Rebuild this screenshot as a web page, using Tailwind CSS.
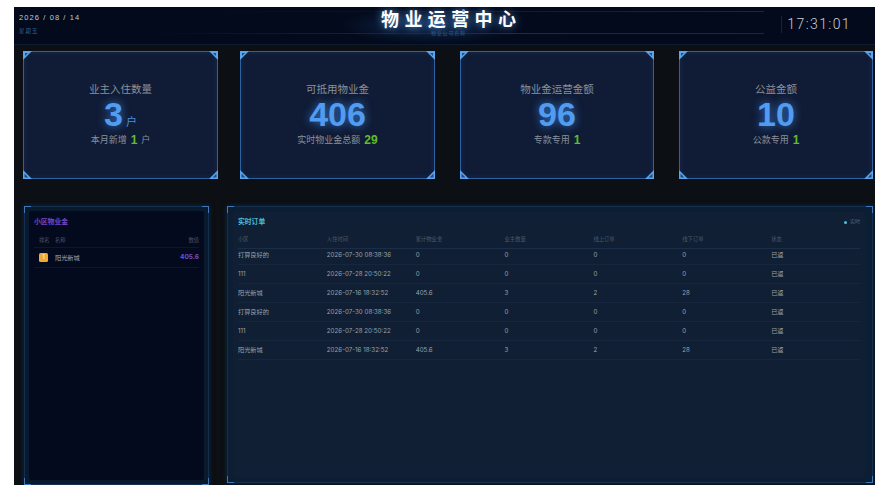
<!DOCTYPE html>
<html lang="zh-CN">
<head>
  <meta charset="UTF-8">
  <title>物业运营中心</title>
  <script src="https://cdn.jsdelivr.net/npm/@tailwindcss/browser@4"></script>
</head>
<body class="bg-white font-['Liberation_Sans','Noto_Sans_CJK_SC',sans-serif]">
<div class="w-[879px] h-[492px] pt-[7px] pb-[7px] pl-[14px] pr-[4px] overflow-hidden">
  <div class="h-[478px] bg-[#0c0f13] flex flex-col overflow-hidden">

    <!-- header -->
    <header class="relative h-[38px] shrink-0 bg-[#030a1c] border-b border-[#0e1c33] flex justify-between">
      <div class="pl-[5px] pt-[6px]">
        <div class="text-[7.5px] leading-[9px] tracking-[1.1px] text-[#c3c9d2]">2026 / 08 / 14</div>
        <div class="mt-[6px] text-[5.5px] leading-[7px] tracking-[1px] text-[#2f5f94]">星期五</div>
      </div>
      <div class="absolute left-[186px] top-[4px] w-[564px] h-px bg-gradient-to-r from-transparent to-[#12294a]"></div>
      <div class="absolute left-[136px] top-[26px] w-[614px] h-px bg-gradient-to-r from-transparent via-[#12305a] to-[#12294a]"></div>
      <div class="absolute left-[326px] top-0 w-[180px] h-[37px] bg-[radial-gradient(ellipse_at_center,#10294f_0%,transparent_70%)]"></div>
      <div class="absolute left-[367px] top-[4px] text-[18px] leading-[18px] font-bold tracking-[5.4px] text-white whitespace-nowrap [text-shadow:0_0_8px_rgba(110,180,255,0.8)]">物业运营中心</div>
      <div class="absolute left-[417px] top-[23px] text-[5px] leading-[7px] tracking-[0.8px] text-[#2f5c90] whitespace-nowrap">物业公司名称</div>
      <div class="absolute left-[448px] top-[2px] w-[3px] h-[3px] rounded-full bg-[#5aa5ec]"></div>
      <div class="mr-[24px] mt-[9px] h-[17px] pl-[5px] border-l border-[#12253f] font-['Roboto'] font-light text-[14px] leading-[17px] tracking-[1.4px] text-[#c9ced6]">17:31:01</div>
    </header>

    <!-- stat cards -->
    <section id="cards" class="mt-[6px] ml-[9px] flex shrink-0"></section>

    <!-- panels -->
    <section class="mt-[27px] ml-[10px] flex flex-1 min-h-0 font-['Inter','Noto_Sans_CJK_SC',sans-serif]">
      <div class="relative w-[185px] h-[279px] shrink-0 p-[4px] bg-[#0a1a2e] border border-[#15304f] shadow-[0_0_5px_#0d2a4a]">
        <div class="absolute -left-px -top-px w-[7px] h-[7px] border-l border-t border-[#3f78b8]"></div>
        <div class="absolute -right-px -top-px w-[7px] h-[7px] border-r border-t border-[#3f78b8]"></div>
        <div class="absolute -left-px -bottom-px w-[7px] h-[7px] border-l border-b border-[#3f78b8]"></div>
        <div class="absolute -right-px -bottom-px w-[7px] h-[7px] border-r border-b border-[#3f78b8]"></div>
        <div class="h-full rounded-[2px] bg-[#030a1e] px-[5px] pt-[6px]">
          <div class="text-[6.8px] leading-[9px] font-semibold text-[#7446c4]">小区物业金</div>
          <div class="mt-[10px] h-[12px] pl-[5px] flex text-[5.3px] leading-[8px] text-[#4a5565] border-b border-[#0c1729]">
            <span class="w-[16px]">排名</span><span class="flex-1">名称</span><span>数值</span>
          </div>
          <div class="h-[20px] pl-[5px] flex items-center border-b border-[#0c1729]">
            <span class="w-[9px] h-[9px] mr-[7px] rounded-[1.5px] bg-[#eda93a] text-white text-[5.5px] leading-[9px] text-center">1</span>
            <span class="flex-1 text-[6.2px] text-[#a3a9b3]">阳光新城</span>
            <span class="text-[6.5px] font-bold text-[#7450c8]">405.6</span>
          </div>
        </div>
      </div>

      <div class="relative w-[646px] h-[277px] ml-[18px] shrink-0 pl-[5px] pr-[7px] py-[5px] bg-[#0c1e34] border border-[#15304f] shadow-[0_0_5px_#0d2a4a]">
        <div class="absolute -left-px -top-px w-[7px] h-[7px] border-l border-t border-[#3f78b8]"></div>
        <div class="absolute -right-px -top-px w-[7px] h-[7px] border-r border-t border-[#3f78b8]"></div>
        <div class="absolute -left-px -bottom-px w-[7px] h-[7px] border-l border-b border-[#3f78b8]"></div>
        <div class="absolute -right-px -bottom-px w-[7px] h-[7px] border-r border-b border-[#3f78b8]"></div>
        <div class="h-full rounded-[2px] bg-[#101f33] px-[5px] pt-[5px]">
          <div class="flex justify-between items-center h-[10px]">
            <span class="text-[6.8px] font-semibold text-[#4cc0dc]">实时订单</span>
            <span class="flex items-center gap-[3px] text-[5px] text-[#55697f]"><i class="w-[3px] h-[3px] rounded-full bg-[#4cc0dc]"></i>实时</span>
          </div>
          <div class="mt-[8px] h-[14px] grid grid-cols-7 text-[5.3px] leading-[9px] text-[#4c5a6b] border-b border-[#1a2e47]">
            <span>小区</span><span>入住时间</span><span>累计物业金</span><span>业主数量</span><span>线上订单</span><span>线下订单</span><span>状态</span>
          </div>
          <div id="rows"></div>
        </div>
      </div>
    </section>
  </div>
</div>

<script>
  const stats = [
    { title: "业主入住数量", value: "3", unit: "户", sub: "本月新增", num: "1", tail: "户", width: "w-[195px]", gap: "" },
    { title: "可抵用物业金", value: "406", unit: "", sub: "实时物业金总额", num: "29", tail: "", width: "w-[195px]", gap: "ml-[22px]" },
    { title: "物业金运营金额", value: "96", unit: "", sub: "专款专用", num: "1", tail: "", width: "w-[194px]", gap: "ml-[25px]" },
    { title: "公益金额", value: "10", unit: "", sub: "公款专用", num: "1", tail: "", width: "w-[194px]", gap: "ml-[25px]" }
  ];

  const corners = `
    <svg class="absolute -left-px -top-px" width="9" height="9" viewBox="0 0 9 9"><path d="M0 0H9L0 9Z" fill="#5aa5ec"/><path d="M2 2H5L2 5Z" fill="#1f4f8a"/></svg>
    <svg class="absolute -right-px -top-px" width="9" height="9" viewBox="0 0 9 9"><path d="M9 0H0L9 9Z" fill="#5aa5ec"/><path d="M7 2H4L7 5Z" fill="#1f4f8a"/></svg>
    <svg class="absolute -left-px -bottom-px" width="9" height="9" viewBox="0 0 9 9"><path d="M0 9H9L0 0Z" fill="#5aa5ec"/><path d="M1.5 7.5H5.5L1.5 3.5Z" fill="#1f4f8a"/></svg>
    <svg class="absolute -right-px -bottom-px" width="9" height="9" viewBox="0 0 9 9"><path d="M9 9H0L9 0Z" fill="#5aa5ec"/><path d="M7.5 7.5H3.5L7.5 3.5Z" fill="#1f4f8a"/></svg>`;

  document.getElementById("cards").innerHTML = stats.map(s => `
    <div class="relative ${s.width} ${s.gap} h-[128px] shrink-0 bg-[#101c36] border border-[#2f609f] flex flex-col items-center pt-[30px] shadow-[inset_0_0_6px_rgba(40,100,170,0.2)]">
      ${corners}
      <div class="text-[10.5px] leading-[14px] text-[#8a919c]">${s.title}</div>
      <div class="mt-[3px] h-[30px] flex items-end">
        <span class="text-[34px] leading-[30px] font-bold text-[#519cf0] [text-shadow:0_0_8px_rgba(70,150,255,0.7)]">${s.value}</span>
        ${s.unit ? `<span class="ml-[3px] text-[11px] leading-[14px] text-[#4a8fdc]">${s.unit}</span>` : ""}
      </div>
      <div class="mt-[5px] flex items-center gap-[4px] text-[9px] leading-[12px] text-[#8a919c]">
        <span>${s.sub}</span><span class="text-[12px] font-bold text-[#62bb2e]">${s.num}</span>${s.tail ? `<span>${s.tail}</span>` : ""}
      </div>
    </div>`).join("");

  const orders = [
    ["打算良好的", "2026-07-30 08:38:36", "0", "0", "0", "0", "已返"],
    ["111", "2026-07-28 20:50:22", "0", "0", "0", "0", "已返"],
    ["阳光新城", "2026-07-16 18:32:52", "405.6", "3", "2", "28", "已返"],
    ["打算良好的", "2026-07-30 08:38:36", "0", "0", "0", "0", "已返"],
    ["111", "2026-07-28 20:50:22", "0", "0", "0", "0", "已返"],
    ["阳光新城", "2026-07-16 18:32:52", "405.6", "3", "2", "28", "已返"]
  ];

  // first row sits tight under the header line
  document.getElementById("rows").innerHTML = orders.map((row, i) => `
    <div class="${i === 0 ? "h-[16px] pb-[4px]" : "h-[19px]"} grid grid-cols-7 items-center text-[6.2px] text-[#9aa2ad] border-b border-[#16273d]">
      ${row.map(cell => `<span>${cell}</span>`).join("")}
    </div>`).join("");
</script>
</body>
</html>
